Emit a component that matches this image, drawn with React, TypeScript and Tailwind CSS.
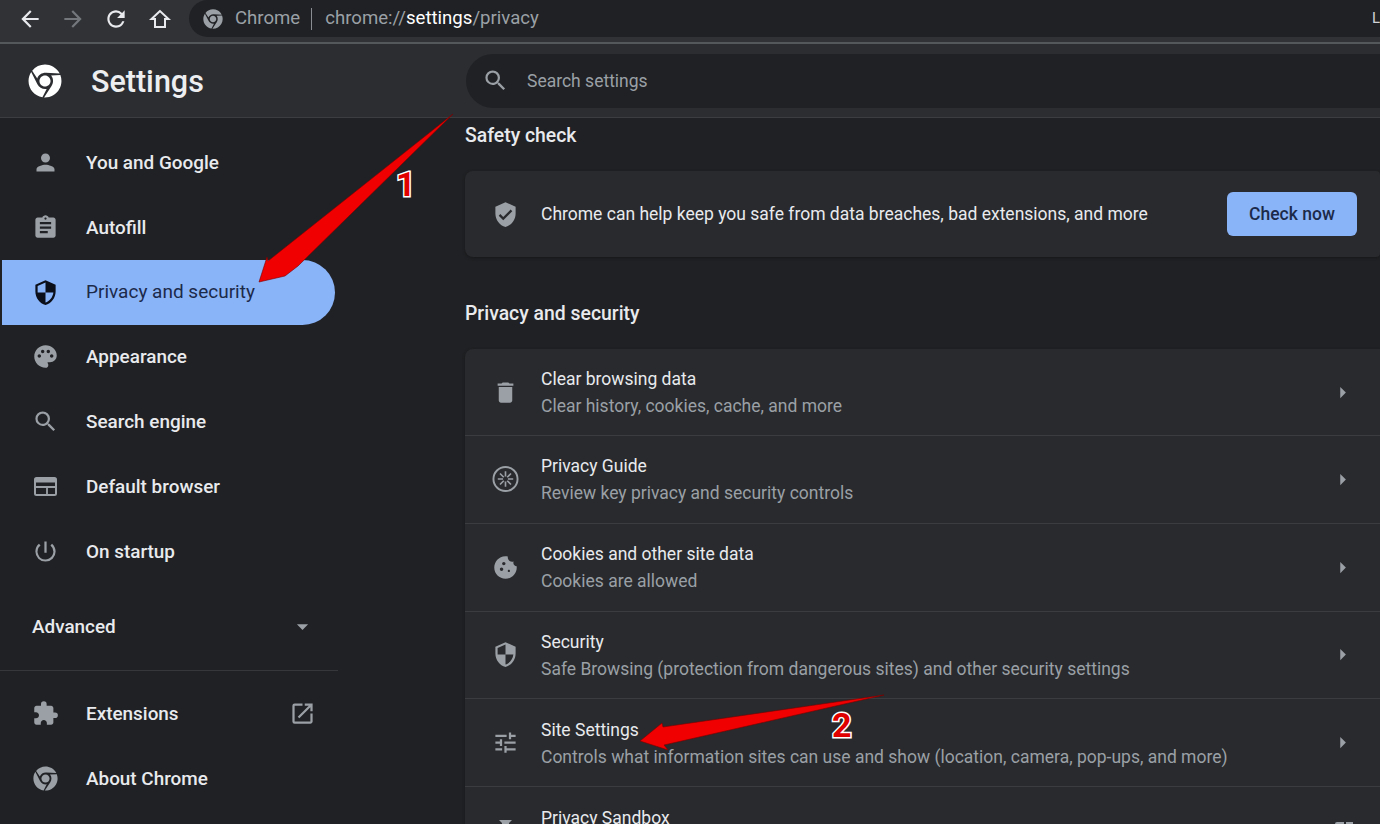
import React from 'react'
import { FaChrome } from 'react-icons/fa'
import {
  MdArrowBack, MdArrowForward, MdRefresh, MdSearch, MdPerson, MdAssignment, MdPalette,
  MdPowerSettingsNew, MdExtension, MdOpenInNew, MdDelete, MdCookie, MdSecurity, MdTune, MdVerifiedUser,
  MdArrowDropDown, MdArrowRight,
} from 'react-icons/md'

function GuideIcon() {
  return (
    <svg width="28" height="28" viewBox="0 0 28 28" fill="none" stroke="currentColor">
      <circle cx="14" cy="14" r="12.5" strokeWidth="2" />
      <path d="M14 6v5.5M14 16.5V22M6 14h5.5M16.5 14H22M8.3 8.3l3.9 3.9M15.8 15.8l3.9 3.9M19.7 8.3l-3.9 3.9M12.2 15.8l-3.9 3.9" strokeWidth="1.7" />
    </svg>
  )
}

function HomeIcon() {
  return (
    <svg width="24" height="24" viewBox="0 0 24 24" fill="none" stroke="currentColor" strokeWidth="2" className="ml-[2px]">
      <path d="M12 4 3.5 12H7v8h10v-8h3.500z" strokeLinejoin="miter" />
    </svg>
  )
}

function BrowserIcon() {
  return (
    <svg width="27" height="27" viewBox="0 0 27 27" fill="none" stroke="currentColor" strokeWidth="2">
      <rect x="3" y="5" width="21" height="17" rx="1.500" />
      <path d="M3 7.500h21" strokeWidth="4" />
      <path d="M3 14h21M15 14v8" strokeWidth="1.800" />
    </svg>
  )
}

function SandboxIcon() {
  return (
    <svg width="27" height="27" viewBox="0 0 27 27" fill="currentColor">
      <path d="M7 3h13l-3 3v6h-7V6z" />
    </svg>
  )
}

const navItems = [
  { label: 'You and Google', icon: <MdPerson size={27} /> },
  { label: 'Autofill', icon: <MdAssignment size={27} /> },
  { label: 'Privacy and security', icon: <MdSecurity size={27} />, active: true },
  { label: 'Appearance', icon: <MdPalette size={27} /> },
  { label: 'Search engine', icon: <MdSearch size={27} /> },
  { label: 'Default browser', icon: <BrowserIcon /> },
  { label: 'On startup', icon: <MdPowerSettingsNew size={27} /> },
]

const rows = [
  { title: 'Clear browsing data', sub: 'Clear history, cookies, cache, and more', icon: <MdDelete size={27} /> },
  { title: 'Privacy Guide', sub: 'Review key privacy and security controls', icon: <GuideIcon /> },
  { title: 'Cookies and other site data', sub: 'Cookies are allowed', icon: <MdCookie size={27} /> },
  { title: 'Security', sub: 'Safe Browsing (protection from dangerous sites) and other security settings', icon: <MdSecurity size={27} /> },
  { title: 'Site Settings', sub: 'Controls what information sites can use and show (location, camera, pop-ups, and more)', icon: <MdTune size={27} /> },
  { title: 'Privacy Sandbox', sub: '', icon: <SandboxIcon />, external: true },
]

export default function App() {
  return (
    <div className="relative flex h-[824px] w-[1380px] flex-col overflow-hidden bg-[#202124] font-[Roboto,sans-serif] text-[#e8eaed]">
      {/* Browser toolbar */}
      <div className="flex h-[42px] shrink-0 items-start bg-[#303236] pl-[17px]">
        <div className="flex h-[37px] items-center gap-[17px] text-[#e8eaed]">
          <MdArrowBack size={26} />
          <MdArrowForward size={26} className="text-[#74777b]" />
          <MdRefresh size={26} />
          <HomeIcon />
        </div>
        <div className="ml-[17px] flex h-[37px] flex-1 items-center rounded-l-[19px] bg-[#202124] pl-[14px] text-[18.6px] text-[#9aa0a6]">
          <FaChrome size={20} />
          <span className="ml-[12px] pt-[1px]">Chrome</span>
          <span className="ml-[11px] h-[22px] w-px bg-[#8a8d91]" />
          <span className="ml-[13px] pt-[1px]">chrome://<span className="text-white">settings</span>/privacy</span>
          <span className="ml-auto text-[15px] leading-none text-[#d0d2d5]">L</span>
        </div>
      </div>
      <div className="h-[2px] shrink-0 bg-[#55585b]" />

      {/* Settings header */}
      <div className="flex h-[74px] shrink-0 items-center border-b border-[#3c3d40] bg-[#2b2d30]">
        <div className="flex w-[466px] shrink-0 items-center pl-[28px]">
          <FaChrome size={34} className="text-white" />
          <span className="ml-[29px] pt-[3px] text-[30.5px] font-medium text-[#eceef0]">Settings</span>
        </div>
        <div className="flex h-[54px] flex-1 items-center rounded-l-[27px] bg-[#202124] pl-[16px] text-[17.5px] text-[#9aa0a6]">
          <MdSearch size={27} />
          <span className="ml-[18px] pt-[2px]">Search settings</span>
        </div>
      </div>

      <div className="flex min-h-0 flex-1">
        {/* Sidebar */}
        <nav className="w-[465px] shrink-0 pt-[12px]">
          {navItems.map(item => (
            <div
              key={item.label}
              className={
                item.active
                  ? 'ml-[2px] flex h-[65px] w-[333px] items-center rounded-r-[33px] bg-[#8ab4f8] pl-[30px] text-[#1c2a4a]'
                  : 'flex h-[64.8px] w-[335px] items-center pl-[32px]'
              }
            >
              <span className={item.active ? 'flex w-[27px] justify-center text-[#0b0f1a]' : 'flex w-[27px] justify-center text-[#9aa0a6]'}>{item.icon}</span>
              <span className={item.active ? 'ml-[27px] pt-[1px] text-[19px] font-normal' : 'ml-[27px] pt-[1px] text-[18.9px] font-medium'}>{item.label}</span>
            </div>
          ))}
          <div className="mt-[11px] flex h-[64px] w-[335px] items-center justify-between pl-[32px] pr-[19px] text-[18.9px] font-medium">
            Advanced
            <MdArrowDropDown size={27} className="text-[#9aa0a6]" />
          </div>
          <div className="mt-[11px] h-px w-[338px] bg-[#35373a]" />
          <div className="mt-[11px] flex h-[64px] w-[335px] items-center pl-[32px] pr-[19px]">
            <span className="flex w-[27px] justify-center text-[#9aa0a6]"><MdExtension size={29} /></span>
            <span className="ml-[27px] pt-[1px] text-[18.9px] font-medium">Extensions</span>
            <MdOpenInNew size={27} className="ml-auto text-[#9aa0a6]" />
          </div>
          <div className="flex h-[65px] w-[335px] items-center pl-[32px]">
            <span className="flex w-[27px] justify-center text-[#9aa0a6]"><FaChrome size={25} /></span>
            <span className="ml-[27px] pt-[1px] text-[18.9px] font-medium">About Chrome</span>
          </div>
        </nav>

        {/* Main column */}
        <main className="min-w-0 flex-1">
          <h2 className="mt-[6px] h-[24px] text-[19.4px] font-medium leading-[24px]">Safety check</h2>
          <div className="mt-[23px] flex h-[86px] items-center rounded-l-[8px] rounded-r-[4px] bg-[#292a2d] pl-[27px] pr-[23px] shadow-[0_1px_3px_#17181a]">
            <MdVerifiedUser size={27} className="text-[#9aa0a6]" />
            <span className="ml-[22px] text-[17.5px]">Chrome can help keep you safe from data breaches, bad extensions, and more</span>
            <button className="ml-auto h-[44px] w-[130px] rounded-[6px] bg-[#8ab4f8] text-[17.5px] font-medium text-[#1c2a4a]">Check now</button>
          </div>
          <h2 className="mt-[45px] h-[24px] text-[19.4px] font-medium leading-[24px]">Privacy and security</h2>
          <div className="mt-[23px] rounded-tl-[8px] bg-[#292a2d] shadow-[0_1px_3px_#17181a]">
            {rows.map((row, i) => (
              <div key={row.title} className={i === 0 ? 'flex h-[86px] items-center pl-[27px] pr-[24px]' : 'flex h-[87.8px] items-center border-t border-[#3b3c3f] pl-[27px] pr-[24px]'}>
                <span className="flex w-[27px] justify-center text-[#9aa0a6]">{row.icon}</span>
                <div className={i === 0 ? 'ml-[22px] flex-1 pt-[1px]' : 'ml-[22px] flex-1 pt-[2px]'}>
                  <div className="text-[17.5px] leading-[27px]">{row.title}</div>
                  <div className="h-[27px] text-[17.5px] leading-[27px] text-[#9aa0a6]">{row.sub}</div>
                </div>
                {row.external ? <MdOpenInNew size={24} className="text-[#9aa0a6]" /> : <MdArrowRight size={27} className="text-[#9aa0a6]" />}
              </div>
            ))}
          </div>
        </main>
      </div>

      {/* Annotation arrows drawn on top of the screenshot */}
      <svg className="absolute left-0 top-0" width="1380" height="824" viewBox="0 0 1380 824">
        <polygon points="453,114 298,266 285,276 259,282 267,257 268,261" fill="#f00000" stroke="#7a0000" strokeWidth="0.6" />
        <polygon points="884,695 664,745 668,750 640,741 662,723 663,727" fill="#f00000" stroke="#7a0000" strokeWidth="0.6" />
      </svg>
      <span className="absolute left-[396px] top-[167px] font-[Roboto,sans-serif] text-[34px] font-bold leading-[34px] text-[#e00000] [-webkit-text-stroke:3px_#ffffff] [paint-order:stroke_fill]">1</span>
      <span className="absolute left-[832px] top-[708px] font-[Roboto,sans-serif] text-[34px] font-bold leading-[34px] text-[#e00000] [-webkit-text-stroke:3px_#ffffff] [paint-order:stroke_fill]">2</span>
    </div>
  )
}
